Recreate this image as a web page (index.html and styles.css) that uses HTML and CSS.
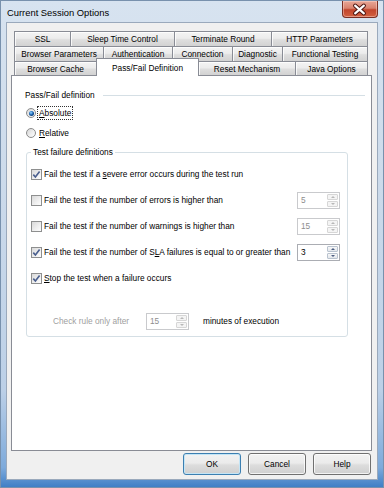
FILE: index.html
```html
<!DOCTYPE html>
<html>
<head>
<meta charset="utf-8">
<link rel="stylesheet" href="styles.css">
</head>
<body>
<div class="window">
  <div class="titlebar">
    <span class="title">Current Session Options</span>
    <div class="close">
      <svg width="36" height="17" viewBox="0 0 36 17">
        <path d="M13.5 4.5 L22.5 12.5 M22.5 4.5 L13.5 12.5" stroke="#4a1410" stroke-width="4.2" stroke-linecap="round"/>
        <path d="M13.5 4.5 L22.5 12.5 M22.5 4.5 L13.5 12.5" stroke="#ffffff" stroke-width="2.2" stroke-linecap="round"/>
      </svg>
    </div>
  </div>
  <div class="client">
    <div class="tabs">
      <div class="tabrow r1">
        <div class="tab">SSL</div>
        <div class="tab">Sleep Time Control</div>
        <div class="tab">Terminate Round</div>
        <div class="tab">HTTP Parameters</div>
      </div>
      <div class="tabrow r2">
        <div class="tab">Browser Parameters</div>
        <div class="tab">Authentication</div>
        <div class="tab">Connection</div>
        <div class="tab">Diagnostic</div>
        <div class="tab">Functional Testing</div>
      </div>
      <div class="tabrow r3">
        <div class="tab">Browser Cache</div>
        <div class="tab sel">Pass/Fail Definition</div>
        <div class="tab">Reset Mechanism</div>
        <div class="tab">Java Options</div>
      </div>
    </div>
    <div class="panel">
      <div class="heading"><span>Pass/Fail definition</span><div class="hline"></div></div>
      <div class="opt first"><span class="radio on"><span class="dot"></span></span><span class="focus"><u>A</u>bsolute</span></div>
      <div class="opt"><span class="radio"></span><span><u>R</u>elative</span></div>
      <fieldset class="group">
        <legend>Test failure definitions</legend>
        <div class="row">
          <span class="cb"><svg width="9" height="9" viewBox="0 0 9 9"><path d="M1.3 4.6 L3.4 7 L7.6 1.4" fill="none" stroke="#4a5f8e" stroke-width="1.6"/></svg></span>
          <span class="lbl">Fail the test if a <u>s</u>evere error occurs during the test run</span>
        </div>
        <div class="row">
          <span class="cb"></span>
          <span class="lbl">Fail the test if the number of errors is higher than</span>
          <div class="spin off"><span class="val">5</span><div class="btns"><span class="sb"><i class="up"></i></span><span class="sb"><i class="dn"></i></span></div></div>
        </div>
        <div class="row">
          <span class="cb"></span>
          <span class="lbl">Fail the test if the number of warnings is higher than</span>
          <div class="spin off"><span class="val">15</span><div class="btns"><span class="sb"><i class="up"></i></span><span class="sb"><i class="dn"></i></span></div></div>
        </div>
        <div class="row">
          <span class="cb"><svg width="9" height="9" viewBox="0 0 9 9"><path d="M1.3 4.6 L3.4 7 L7.6 1.4" fill="none" stroke="#4a5f8e" stroke-width="1.6"/></svg></span>
          <span class="lbl">Fail the test if the number of S<u>L</u>A failures is equal to or greater than</span>
          <div class="spin"><span class="val">3</span><div class="btns"><span class="sb"><i class="up"></i></span><span class="sb"><i class="dn"></i></span></div></div>
        </div>
        <div class="row">
          <span class="cb"><svg width="9" height="9" viewBox="0 0 9 9"><path d="M1.3 4.6 L3.4 7 L7.6 1.4" fill="none" stroke="#4a5f8e" stroke-width="1.6"/></svg></span>
          <span class="lbl"><u>S</u>top the test when a failure occurs</span>
        </div>
        <div class="row sub">
          <span class="dis">Check rule only after</span>
          <div class="spin off"><span class="val">15</span><div class="btns"><span class="sb"><i class="up"></i></span><span class="sb"><i class="dn"></i></span></div></div>
          <span class="after">minutes of execution</span>
        </div>
      </fieldset>
    </div>
    <div class="buttons">
      <button class="btn default">OK</button>
      <button class="btn">Cancel</button>
      <button class="btn">Help</button>
    </div>
  </div>
</div>
</body>
</html>
```
FILE: styles.css
```css
html, body {
  margin: 0;
  padding: 0;
}
body {
  width: 384px;
  height: 488px;
  overflow: hidden;
  font-family: "Liberation Sans", Arial, sans-serif;
  font-size: 8.3px;
  color: #000;
}
.window {
  box-sizing: border-box;
  width: 384px;
  height: 488px;
  border: 1px solid #7891ad;
  background: linear-gradient(to bottom, #d7e3f0 0, #cddbeb 35%, #bcd0e7 80%, #7eaadb 96%, #3f7fc6 100%);
  display: flex;
  flex-direction: column;
}
.titlebar {
  height: 21px;
  display: flex;
  align-items: center;
  padding-left: 6px;
  flex: none;
}
.title {
  font-size: 9.4px;
  color: #000;
  margin-top: 1px;
}
.close {
  margin-left: auto;
  margin-right: 5px;
  align-self: flex-start;
  width: 36px;
  height: 17px;
  box-sizing: border-box;
  border: 1px solid #7a2f24;
  border-top: none;
  border-radius: 0 0 4px 4px;
  background: linear-gradient(to bottom, #e8a797 0, #d9826e 45%, #c2452c 55%, #d2603f 100%);
  box-shadow: inset 0 0 0 1px rgba(255, 220, 210, 0.45);
  display: flex;
}
.close svg {
  display: block;
  margin-left: -1px;
}
.client {
  box-sizing: border-box;
  height: 458px;
  margin: 0 5px;
  border: 1px solid #9aa9bc;
  background: #f0f0f0;
  padding-top: 8px;
  flex: none;
}
.tabs {
  margin-left: 7px;
  width: 354px;
}
.tabrow {
  display: flex;
  align-items: flex-start;
}
.r1, .r2 { height: 15px; }
.r3 { height: 14px; }
.tab {
  box-sizing: border-box;
  height: 100%;
  border: 1px solid #898c95;
  border-bottom: none;
  margin-left: -1px;
  background: linear-gradient(to bottom, #f4f4f4 0, #ececec 45%, #dedede 55%, #d2d2d2 100%);
  box-shadow: inset 1px 1px 0 rgba(255, 255, 255, 0.8);
  display: flex;
  align-items: center;
  justify-content: center;
  white-space: nowrap;
  flex: none;
}
.tab:first-child { margin-left: 0; }
.r1 .tab:nth-child(1) { width: 57px; }
.r1 .tab:nth-child(2) { width: 105px; }
.r1 .tab:nth-child(3) { width: 98px; }
.r1 .tab:nth-child(4) { width: 97px; }
.r2 .tab:nth-child(1) { width: 90px; }
.r2 .tab:nth-child(2) { width: 70px; }
.r2 .tab:nth-child(3) { width: 61px; }
.r2 .tab:nth-child(4) { width: 51px; }
.r2 .tab:nth-child(5) { width: 86px; }
.r3 .tab:nth-child(1) { width: 83px; }
.r3 .tab:nth-child(2) { width: 103px; }
.r3 .tab:nth-child(3) { width: 98px; }
.r3 .tab:nth-child(4) { width: 73px; }
.tab.sel {
  height: 18px;
  margin-top: -3px;
  background: #fff;
  box-shadow: none;
  position: relative;
  z-index: 1;
}
.panel {
  box-sizing: border-box;
  width: 361px;
  height: 376px;
  margin-left: 4px;
  border: 1px solid #898c95;
  background: #fff;
  padding: 13px 6px 0 13px;
}
.heading {
  display: flex;
  align-items: center;
  height: 12px;
  line-height: 12px;
}
.hline {
  flex: 1;
  border-top: 1px solid #d5dfe5;
  margin-left: 8px;
}
.opt {
  display: flex;
  align-items: center;
  height: 20px;
}
.opt.first { margin-top: 2px; }
.radio {
  box-sizing: border-box;
  width: 10px;
  height: 10px;
  border-radius: 50%;
  border: 1px solid #8b8b8b;
  margin-left: 1px;
  margin-right: 3px;
  background: linear-gradient(135deg, #d4d4d4 0, #eeeeee 55%, #fdfdfd 100%);
  flex: none;
  display: flex;
  align-items: center;
  justify-content: center;
}
.dot {
  width: 5px;
  height: 5px;
  border-radius: 50%;
  background: radial-gradient(circle at 40% 35%, #a8dcfa 0, #3a8ad6 1.3px, #124a8a 2.6px);
}
.focus {
  outline: 1px dotted #333;
  outline-offset: 1px;
}
.group {
  box-sizing: border-box;
  width: 322px;
  margin: 3px 0 0 1px;
  border: 1px solid #d5dfe5;
  border-radius: 3px;
  padding: 3px 4px 2px 4px;
  min-width: 0;
}
.group legend {
  padding: 0 2px;
  line-height: 12px;
}
.row {
  display: flex;
  align-items: center;
  height: 26px;
}
.cb {
  box-sizing: border-box;
  width: 11px;
  height: 11px;
  border: 1px solid #8e8f8f;
  background: linear-gradient(135deg, #d9d9d9 0, #f0f0f0 60%, #fdfdfd 100%);
  margin-right: 2px;
  flex: none;
  display: flex;
  align-items: center;
  justify-content: center;
}
.cb svg { display: block; }
.lbl {
  flex: 1;
  white-space: nowrap;
}
.spin {
  box-sizing: border-box;
  width: 43px;
  height: 17px;
  border: 1px solid #abadb3;
  background: #fff;
  display: flex;
  margin-right: 3px;
  flex: none;
}
.spin.off { border-color: #c9cacd; }
.spin .val {
  flex: 1;
  padding-left: 3px;
  line-height: 15px;
}
.spin.off .val { color: #8d8d8d; }
.btns {
  width: 12px;
  display: flex;
  flex-direction: column;
  padding: 1px 1px 1px 0;
  box-sizing: border-box;
  gap: 1px;
}
.sb {
  flex: 1;
  box-sizing: border-box;
  border: 1px solid #b9c3cf;
  border-radius: 1px;
  background: linear-gradient(to bottom, #f7f7f7, #e3e7ec);
  display: flex;
  align-items: center;
  justify-content: center;
}
.spin.off .sb {
  border-color: #d6d6d6;
  background: #f4f4f4;
}
.up, .dn {
  width: 0;
  height: 0;
  border-left: 2px solid transparent;
  border-right: 2px solid transparent;
}
.up { border-bottom: 2px solid #4d5f82; }
.dn { border-top: 2px solid #4d5f82; }
.spin.off .up { border-bottom-color: #b8b8b8; }
.spin.off .dn { border-top-color: #b8b8b8; }
.row.sub { margin-top: 17px; }
.dis {
  color: #a0a0a0;
  margin-left: 22px;
  width: 93px;
  flex: none;
  white-space: nowrap;
}
.row.sub .spin { margin-right: 0; }
.after {
  margin-left: 14px;
  white-space: nowrap;
}
.buttons {
  display: flex;
  justify-content: flex-end;
  gap: 7px;
  margin-top: 2px;
  padding-right: 6px;
}
.btn {
  box-sizing: border-box;
  width: 58px;
  height: 22px;
  border: 1px solid #707070;
  border-radius: 3px;
  background: linear-gradient(to bottom, #f2f2f2 0, #ebebeb 45%, #dddddd 55%, #cfcfcf 100%);
  box-shadow: inset 0 0 0 1px rgba(255, 255, 255, 0.75);
  font-family: inherit;
  font-size: 8.3px;
  color: #000;
  padding: 0;
}
.btn.default {
  border-color: #3c7fb1;
  box-shadow: inset 0 0 0 1px #c4e5f6;
}
```
